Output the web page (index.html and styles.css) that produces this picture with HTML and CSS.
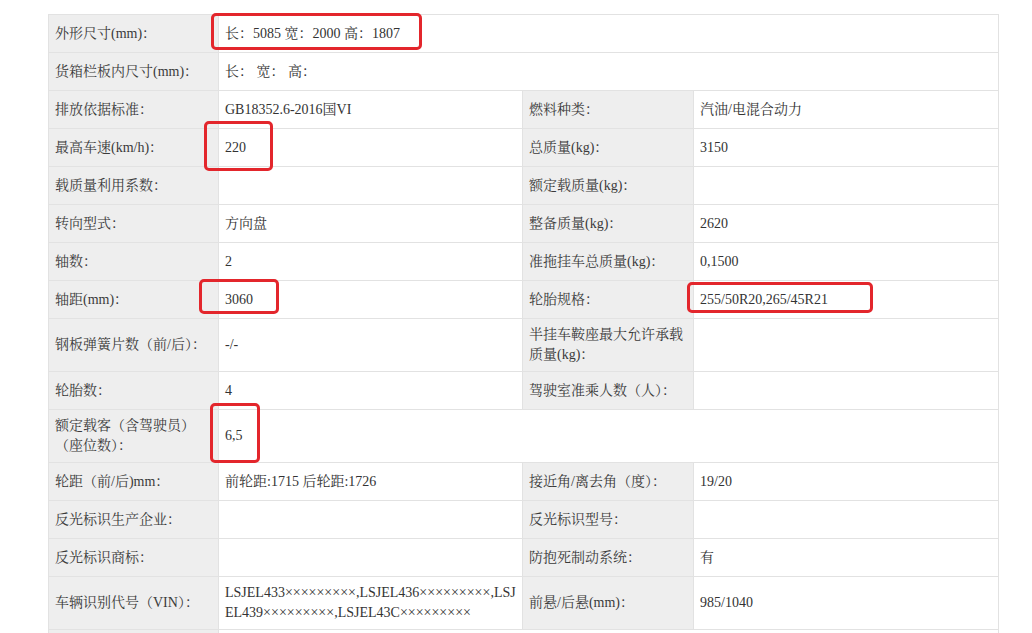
FILE: index.html
```html
<!DOCTYPE html>
<html lang="zh-CN">
<head>
<meta charset="utf-8">
<title>车辆参数</title>
<link rel="stylesheet" href="styles.css">
</head>
<body>
<div class="wrap">
  <table class="spec">
    <colgroup>
      <col class="c-label"><col class="c-value"><col class="c-label2"><col class="c-value2">
    </colgroup>
    <tbody>
      <tr><td class="lb">外形尺寸(mm)：</td><td colspan="3">长：5085 宽：2000 高：1807</td></tr>
      <tr><td class="lb">货箱栏板内尺寸(mm)：</td><td colspan="3">长： 宽： 高：</td></tr>
      <tr><td class="lb">排放依据标准：</td><td>GB18352.6-2016国VI</td><td class="lb">燃料种类：</td><td>汽油/电混合动力</td></tr>
      <tr><td class="lb">最高车速(km/h)：</td><td>220</td><td class="lb">总质量(kg)：</td><td>3150</td></tr>
      <tr><td class="lb">载质量利用系数：</td><td></td><td class="lb">额定载质量(kg)：</td><td></td></tr>
      <tr><td class="lb">转向型式：</td><td>方向盘</td><td class="lb">整备质量(kg)：</td><td>2620</td></tr>
      <tr><td class="lb">轴数：</td><td>2</td><td class="lb">准拖挂车总质量(kg)：</td><td>0,1500</td></tr>
      <tr><td class="lb">轴距(mm)：</td><td>3060</td><td class="lb">轮胎规格：</td><td>255/50R20,265/45R21</td></tr>
      <tr><td class="lb">钢板弹簧片数（前/后）：</td><td>-/-</td><td class="lb">半挂车鞍座最大允许承载质量(kg)：</td><td></td></tr>
      <tr><td class="lb">轮胎数：</td><td>4</td><td class="lb">驾驶室准乘人数（人）：</td><td></td></tr>
      <tr><td class="lb">额定载客（含驾驶员）（座位数）：</td><td colspan="3">6,5</td></tr>
      <tr><td class="lb">轮距（前/后)mm：</td><td>前轮距:1715 后轮距:1726</td><td class="lb">接近角/离去角（度）：</td><td>19/20</td></tr>
      <tr><td class="lb">反光标识生产企业：</td><td></td><td class="lb">反光标识型号：</td><td></td></tr>
      <tr><td class="lb">反光标识商标：</td><td></td><td class="lb">防抱死制动系统：</td><td>有</td></tr>
      <tr><td class="lb">车辆识别代号（VIN）：</td><td class="vin">LSJEL433×××××××××,LSJEL436×××××××××,LSJEL439×××××××××,LSJEL43C×××××××××</td><td class="lb">前悬/后悬(mm)：</td><td>985/1040</td></tr>
      <tr><td class="lb"></td><td colspan="3"></td></tr>
    </tbody>
  </table>
  <span class="mark m1"></span>
  <span class="mark m2"></span>
  <span class="mark m3"></span>
  <span class="mark m4"></span>
  <span class="mark m5"></span>
</div>
</body>
</html>
```
FILE: styles.css
```css
html, body {
  margin: 0;
  padding: 0;
  background: #ffffff;
}
body {
  font-family: "Liberation Serif", "Noto Serif CJK SC", "Noto Sans CJK SC", serif;
  font-size: 14px;
  color: #333333;
  overflow: hidden;
}
.wrap {
  position: relative;
  padding: 14px 0 0 48px;
}
.spec {
  border-collapse: collapse;
  table-layout: fixed;
  width: 950px;
}
.c-label { width: 170px; }
.c-value { width: 304px; }
.c-label2 { width: 171px; }
.c-value2 { width: 305px; }
.spec td {
  border: 1px solid #e2e2e2;
  padding: 6px 6px;
  height: 25px;
  line-height: 20px;
  vertical-align: middle;
  background: #ffffff;
}
.spec td.lb {
  background: #eeeeee;
  color: #3a3a3a;
}
.spec td.vin {
  word-break: break-all;
}
.mark {
  position: absolute;
  border: 3px solid #e3262c;
  border-radius: 5px;
  box-sizing: border-box;
}
.m1 { left: 211px; top: 13px; width: 211px; height: 37px; }
.m2 { left: 204px; top: 121px; width: 69px; height: 50px; }
.m3 { left: 199px; top: 279px; width: 80px; height: 35px; }
.m4 { left: 687px; top: 282px; width: 186px; height: 31px; }
.m5 { left: 210px; top: 403px; width: 50px; height: 60px; }
```
